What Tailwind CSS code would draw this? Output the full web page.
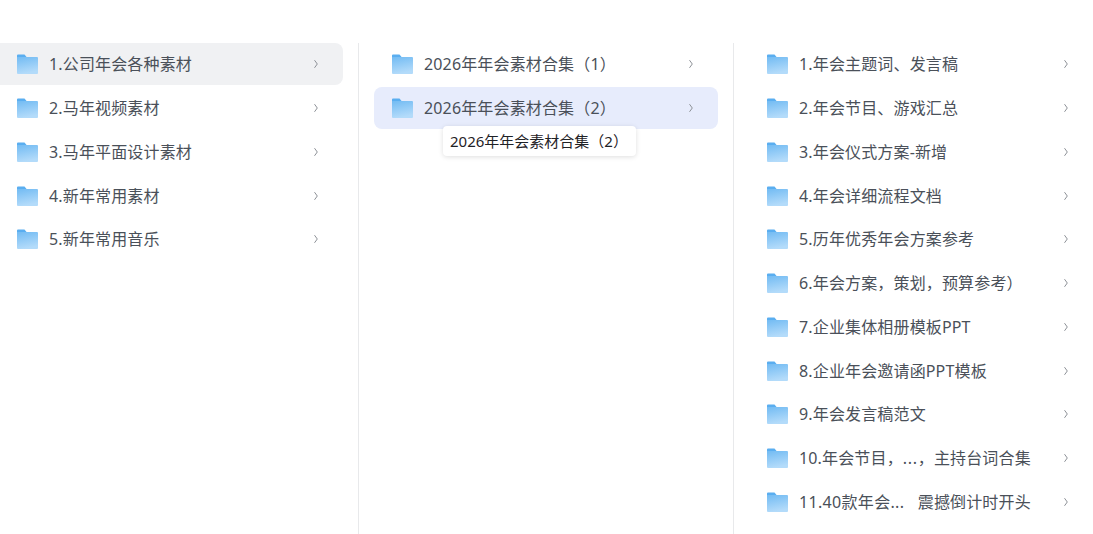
<!DOCTYPE html>
<html lang="zh">
<head>
  <meta charset="UTF-8">
  <title>素材目录</title>
  <meta name="viewport" content="width=device-width, initial-scale=1.0">
  <script src="https://cdn.jsdelivr.net/npm/@tailwindcss/browser@4"></script>
</head>
<body class="bg-white h-[534px] overflow-hidden font-['Noto_Sans','Noto_Sans_CJK_SC',sans-serif] text-[16px] tracking-[0.15px] text-[#4a5059]">
  <svg class="absolute w-0 h-0">
    <defs>
      <linearGradient id="folderBody" x1="0" y1="0" x2="0.25" y2="1">
        <stop offset="0" stop-color="#72bbf3"/>
        <stop offset="1" stop-color="#b3dbfa"/>
      </linearGradient>
      <symbol id="folder" viewBox="0 0 21 20">
        <path d="M0 1.500a1 1 0 0 1 1-1h6.500l2.500 3H0z" fill="#5aaef0"/>
        <path d="M0 3h20a1 1 0 0 1 1 1v15a1 1 0 0 1-1 1H1a1 1 0 0 1-1-1z" fill="url(#folderBody)"/>
      </symbol>
      <symbol id="chevron" viewBox="0 0 6 10">
        <path d="M1.500 1.200 4.300 5 1.500 8.800" fill="none" stroke="#8d9197" stroke-width="1"/>
      </symbol>
    </defs>
  </svg>

  <div class="flex pt-[43.33px] h-[534px]">
    <!-- col 1 -->
    <div class="w-[359px] shrink-0 pr-[15px] border-r border-[#e8e9eb] flex flex-col gap-[1.760px]">
      <div class="h-[42px] flex items-center pl-[17px] pr-[24px] rounded-r-lg bg-[#f0f1f3]">
        <svg class="w-[21px] h-[20px] shrink-0"><use href="#folder"/></svg>
        <span class="ml-[11px] flex-1 truncate">1.公司年会各种素材</span>
        <svg class="w-[6px] h-[10px] shrink-0"><use href="#chevron"/></svg>
      </div>
      <div class="h-[42px] flex items-center pl-[17px] pr-[24px]">
        <svg class="w-[21px] h-[20px] shrink-0"><use href="#folder"/></svg>
        <span class="ml-[11px] flex-1 truncate">2.马年视频素材</span>
        <svg class="w-[6px] h-[10px] shrink-0"><use href="#chevron"/></svg>
      </div>
      <div class="h-[42px] flex items-center pl-[17px] pr-[24px]">
        <svg class="w-[21px] h-[20px] shrink-0"><use href="#folder"/></svg>
        <span class="ml-[11px] flex-1 truncate">3.马年平面设计素材</span>
        <svg class="w-[6px] h-[10px] shrink-0"><use href="#chevron"/></svg>
      </div>
      <div class="h-[42px] flex items-center pl-[17px] pr-[24px]">
        <svg class="w-[21px] h-[20px] shrink-0"><use href="#folder"/></svg>
        <span class="ml-[11px] flex-1 truncate">4.新年常用素材</span>
        <svg class="w-[6px] h-[10px] shrink-0"><use href="#chevron"/></svg>
      </div>
      <div class="h-[42px] flex items-center pl-[17px] pr-[24px]">
        <svg class="w-[21px] h-[20px] shrink-0"><use href="#folder"/></svg>
        <span class="ml-[11px] flex-1 truncate">5.新年常用音乐</span>
        <svg class="w-[6px] h-[10px] shrink-0"><use href="#chevron"/></svg>
      </div>
    </div>

    <!-- col 2 -->
    <div class="relative w-[375px] shrink-0 px-[15px] border-r border-[#e8e9eb] flex flex-col gap-[1.760px]">
      <div class="h-[42px] flex items-center pl-[18px] pr-[24px]">
        <svg class="w-[21px] h-[20px] shrink-0"><use href="#folder"/></svg>
        <span class="ml-[11px] flex-1 truncate">2026年年会素材合集（1）</span>
        <svg class="w-[6px] h-[10px] shrink-0"><use href="#chevron"/></svg>
      </div>
      <div class="h-[42px] flex items-center pl-[18px] pr-[24px] rounded-lg bg-[#e7ecfc]">
        <svg class="w-[21px] h-[20px] shrink-0"><use href="#folder"/></svg>
        <span class="ml-[11px] flex-1 truncate">2026年年会素材合集（2）</span>
        <svg class="w-[6px] h-[10px] shrink-0"><use href="#chevron"/></svg>
      </div>
      <div class="absolute left-[84px] top-[83px] h-[30px] w-[193px] pl-[7px] flex items-center rounded bg-white text-[15px] tracking-normal text-[#1f2226] whitespace-nowrap shadow-[0_1px_5px_rgba(0,0,0,0.13)]">2026年年会素材合集（2）</div>
    </div>

    <!-- col 3 -->
    <div class="flex-1 min-w-0 pl-[15px] flex flex-col gap-[1.760px]">
      <div class="h-[42px] flex items-center pl-[18px] pr-[24px]">
        <svg class="w-[21px] h-[20px] shrink-0"><use href="#folder"/></svg>
        <span class="ml-[11px] flex-1 truncate">1.年会主题词、发言稿</span>
        <svg class="w-[6px] h-[10px] shrink-0"><use href="#chevron"/></svg>
      </div>
      <div class="h-[42px] flex items-center pl-[18px] pr-[24px]">
        <svg class="w-[21px] h-[20px] shrink-0"><use href="#folder"/></svg>
        <span class="ml-[11px] flex-1 truncate">2.年会节目、游戏汇总</span>
        <svg class="w-[6px] h-[10px] shrink-0"><use href="#chevron"/></svg>
      </div>
      <div class="h-[42px] flex items-center pl-[18px] pr-[24px]">
        <svg class="w-[21px] h-[20px] shrink-0"><use href="#folder"/></svg>
        <span class="ml-[11px] flex-1 truncate">3.年会仪式方案-新增</span>
        <svg class="w-[6px] h-[10px] shrink-0"><use href="#chevron"/></svg>
      </div>
      <div class="h-[42px] flex items-center pl-[18px] pr-[24px]">
        <svg class="w-[21px] h-[20px] shrink-0"><use href="#folder"/></svg>
        <span class="ml-[11px] flex-1 truncate">4.年会详细流程文档</span>
        <svg class="w-[6px] h-[10px] shrink-0"><use href="#chevron"/></svg>
      </div>
      <div class="h-[42px] flex items-center pl-[18px] pr-[24px]">
        <svg class="w-[21px] h-[20px] shrink-0"><use href="#folder"/></svg>
        <span class="ml-[11px] flex-1 truncate">5.历年优秀年会方案参考</span>
        <svg class="w-[6px] h-[10px] shrink-0"><use href="#chevron"/></svg>
      </div>
      <div class="h-[42px] flex items-center pl-[18px] pr-[24px]">
        <svg class="w-[21px] h-[20px] shrink-0"><use href="#folder"/></svg>
        <span class="ml-[11px] flex-1 truncate">6.年会方案，策划，预算参考）</span>
        <svg class="w-[6px] h-[10px] shrink-0"><use href="#chevron"/></svg>
      </div>
      <div class="h-[42px] flex items-center pl-[18px] pr-[24px]">
        <svg class="w-[21px] h-[20px] shrink-0"><use href="#folder"/></svg>
        <span class="ml-[11px] flex-1 truncate">7.企业集体相册模板PPT</span>
        <svg class="w-[6px] h-[10px] shrink-0"><use href="#chevron"/></svg>
      </div>
      <div class="h-[42px] flex items-center pl-[18px] pr-[24px]">
        <svg class="w-[21px] h-[20px] shrink-0"><use href="#folder"/></svg>
        <span class="ml-[11px] flex-1 truncate">8.企业年会邀请函PPT模板</span>
        <svg class="w-[6px] h-[10px] shrink-0"><use href="#chevron"/></svg>
      </div>
      <div class="h-[42px] flex items-center pl-[18px] pr-[24px]">
        <svg class="w-[21px] h-[20px] shrink-0"><use href="#folder"/></svg>
        <span class="ml-[11px] flex-1 truncate">9.年会发言稿范文</span>
        <svg class="w-[6px] h-[10px] shrink-0"><use href="#chevron"/></svg>
      </div>
      <div class="h-[42px] flex items-center pl-[18px] pr-[24px]">
        <svg class="w-[21px] h-[20px] shrink-0"><use href="#folder"/></svg>
        <span class="ml-[11px] flex-1 truncate">10.年会节目，<span class="tracking-[0.7px]">...</span>，主持台词合集</span>
        <svg class="w-[6px] h-[10px] shrink-0"><use href="#chevron"/></svg>
      </div>
      <div class="h-[42px] flex items-center pl-[18px] pr-[24px]">
        <svg class="w-[21px] h-[20px] shrink-0"><use href="#folder"/></svg>
        <span class="ml-[11px] flex-1 truncate whitespace-pre"><span class="tracking-[0.32px]">11.40款年会...   </span>震撼倒计时开头</span>
        <svg class="w-[6px] h-[10px] shrink-0"><use href="#chevron"/></svg>
      </div>
    </div>
  </div>
</body>
</html>
